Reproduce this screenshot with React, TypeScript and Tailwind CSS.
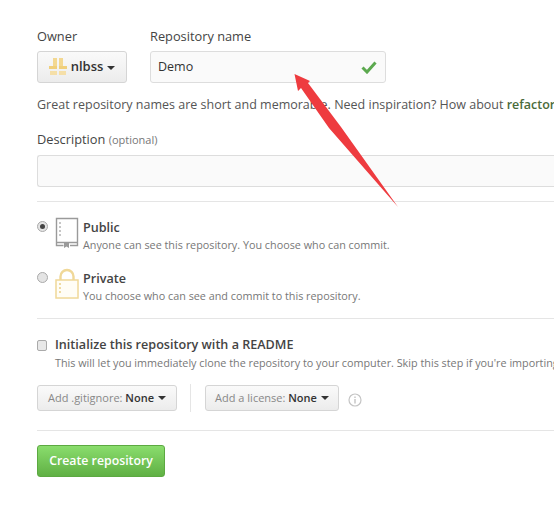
const Caret = () => (
    <span className="ml-1 inline-block align-middle border-x-[4px] border-t-[4px] border-x-transparent border-t-[#333]"></span>
);

const OwnerLogo = () => (
    <svg width="18" height="18" viewBox="0 0 18 18" className="shrink-0">
        <rect x="4" y="0" width="4" height="8" fill="#f3d892" />
        <rect x="10" y="0" width="4" height="8" fill="#f3d892" />
        <rect x="0" y="8" width="8" height="3" fill="#f0cf7c" />
        <rect x="10" y="8" width="8" height="3" fill="#f0cf7c" />
        <rect x="1" y="13" width="7" height="4" fill="#f5dfa8" />
        <rect x="10" y="13" width="7" height="4" fill="#f5dfa8" />
    </svg>
);

const BookIcon = () => (
    <svg width="24" height="32" viewBox="0 0 24 32" fill="none" className="shrink-0">
        <path d="M1.5 1.5h21v24H1.5zM1.5 25.5v3h7M15 28.5h7.5v-3" stroke="#9a9a9a" strokeWidth="1.4" />
        <path d="M5 5v2M5 9v2M5 13v2M5 17v2" stroke="#a8a8a8" strokeWidth="1.3" />
        <path d="M9 25v6l2.5-1.5L14 31v-6z" fill="#9a9a9a" />
    </svg>
);

const LockIcon = () => (
    <svg width="24" height="32" viewBox="0 0 24 32" fill="none" className="shrink-0">
        <path d="M5.5 12V8.5a6.5 6.5 0 0 1 13 0V12" stroke="#f0d898" strokeWidth="2.4" />
        <rect x="1" y="12" width="22" height="18" stroke="#f0d898" strokeWidth="1.5" fill="#fffdf6" />
        <path d="M5 15v2M5 19v2M5 23v2" stroke="#e6c978" strokeWidth="1.3" />
    </svg>
);

const RedArrow = () => (
    <svg width="110" height="140" viewBox="0 0 110 140" className="absolute left-[292px] top-[71px]">
        <path d="M2.5 3 L18 10 L16 12 L49 56 L106 136 L37 57 L9 17 L6 20 Z" fill="#ee3b3f" />
    </svg>
);

const App = () => {
    return (
        <div className="relative w-[554px] h-[505px] overflow-hidden bg-white pl-[37px] pt-[28px] font-['Open_Sans','Liberation_Sans',sans-serif] text-[#333] whitespace-nowrap">
            {/* Owner and name */}
            <div className="flex items-start">
                <div className="w-[113px]">
                    <div className="h-[23px] text-[12.8px] leading-[16px] font-medium text-[#444]">Owner</div>
                    <div className="flex items-center justify-center gap-[4px] w-[90px] h-[32px] rounded-[3px] border border-[#d5d5d5] bg-gradient-to-b from-[#fafafa] to-[#ececec] text-[13px] font-semibold">
                        <OwnerLogo />
                        <span>nlbss<Caret /></span>
                    </div>
                </div>
                <div className="w-[236px]">
                    <div className="h-[23px] text-[12.8px] leading-[16px] font-medium text-[#444]">Repository name</div>
                    <div className="flex items-center justify-between w-[236px] h-[32px] rounded-[3px] border border-[#ddd] bg-[#fafafa] pl-[7px] pr-[8px] text-[12.5px]">
                        <span className="pt-[1px]">Demo</span>
                        <svg width="16" height="14" viewBox="0 0 16 14">
                            <path d="M1.5 7.5 L6 12 L14.5 2.5" fill="none" stroke="#5ca94f" strokeWidth="3" />
                        </svg>
                    </div>
                </div>
            </div>

            <div className="mt-[13px] text-[12.5px] leading-[18px] text-[#555]">
                Great repository names are short and memorable. Need inspiration? How about <b className="font-semibold text-[#4a6b3a]">refactor</b>
            </div>

            {/* Description */}
            <div className="mt-[17px] text-[12.8px] leading-[16px] font-medium text-[#444]">
                Description <span className="text-[11px] font-normal text-[#777]">(optional)</span>
            </div>
            <div className="mt-[7px] h-[32px] rounded-l-[3px] border border-r-0 border-[#ddd] bg-[#fafafa]"></div>
            <div className="mt-[14px] border-t border-[#e5e5e5]"></div>

            {/* Visibility */}
            <div className="mt-[15px] flex items-start">
                <span className="mt-[4px] mr-[7px] flex items-center justify-center w-[11px] h-[11px] rounded-full border border-[#aaa] bg-[#e4e4e4]">
                    <span className="w-[5px] h-[5px] rounded-full bg-[#444]"></span>
                </span>
                <BookIcon />
                <div className="ml-[4px] pt-[1px]">
                    <div className="text-[12.6px] leading-[19px] font-semibold text-[#444]">Public</div>
                    <div className="text-[10.8px] leading-[16px] text-[#777]">Anyone can see this repository. You choose who can commit.</div>
                </div>
            </div>
            <div className="mt-[15px] flex items-start">
                <span className="mt-[4px] mr-[7px] w-[11px] h-[11px] rounded-full border border-[#aaa] bg-[#e4e4e4]"></span>
                <LockIcon />
                <div className="ml-[4px] pt-[1px]">
                    <div className="text-[12.6px] leading-[19px] font-semibold text-[#444]">Private</div>
                    <div className="text-[10.8px] leading-[16px] text-[#777]">You choose who can see and commit to this repository.</div>
                </div>
            </div>
            <div className="mt-[14px] border-t border-[#e5e5e5]"></div>

            {/* Init */}
            <div className="mt-[17px] flex items-center">
                <span className="mr-[8px] w-[10px] h-[11px] rounded-[2px] border border-[#aaa] bg-[#e8e8e8]"></span>
                <span className="text-[12.6px] leading-[18px] font-semibold text-[#444]">Initialize this repository with a README</span>
            </div>
            <div className="ml-[18px] text-[10.8px] leading-[18px] text-[#777]">
                This will let you immediately clone the repository to your computer. Skip this step if you're importing
            </div>

            <div className="mt-[12px] flex items-center">
                <div className="flex items-center justify-center w-[140px] h-[26px] rounded-[3px] border border-[#d5d5d5] bg-gradient-to-b from-[#fafafa] to-[#ececec] text-[11px]">
                    <span className="text-[#888]">Add .gitignore:&nbsp;</span><span className="font-semibold text-[#333]">None</span><Caret />
                </div>
                <div className="ml-[13px] mr-[14px] h-[28px] border-l border-[#e5e5e5]"></div>
                <div className="flex items-center justify-center w-[134px] h-[26px] rounded-[3px] border border-[#d5d5d5] bg-gradient-to-b from-[#fafafa] to-[#ececec] text-[11px]">
                    <span className="text-[#888]">Add a license:&nbsp;</span><span className="font-semibold text-[#333]">None</span><Caret />
                </div>
                <svg width="14" height="14" viewBox="0 0 14 14" fill="none" className="ml-[9px] mt-[3px]">
                    <circle cx="7" cy="7" r="6" stroke="#c4c4c4" strokeWidth="1.2" />
                    <path d="M7 6v4.5M7 3.5v1.5" stroke="#c4c4c4" strokeWidth="1.4" />
                </svg>
            </div>
            <div className="mt-[18px] border-t border-[#e5e5e5]"></div>

            <div className="mt-[14px] flex items-center justify-center w-[128px] h-[32px] rounded-[3px] border border-[#5ca941] bg-gradient-to-b from-[#8add6d] to-[#60b044] pt-[1px] text-[12.3px] font-semibold text-white">
                Create repository
            </div>

            <RedArrow />
        </div>
    );
};

export default App;
